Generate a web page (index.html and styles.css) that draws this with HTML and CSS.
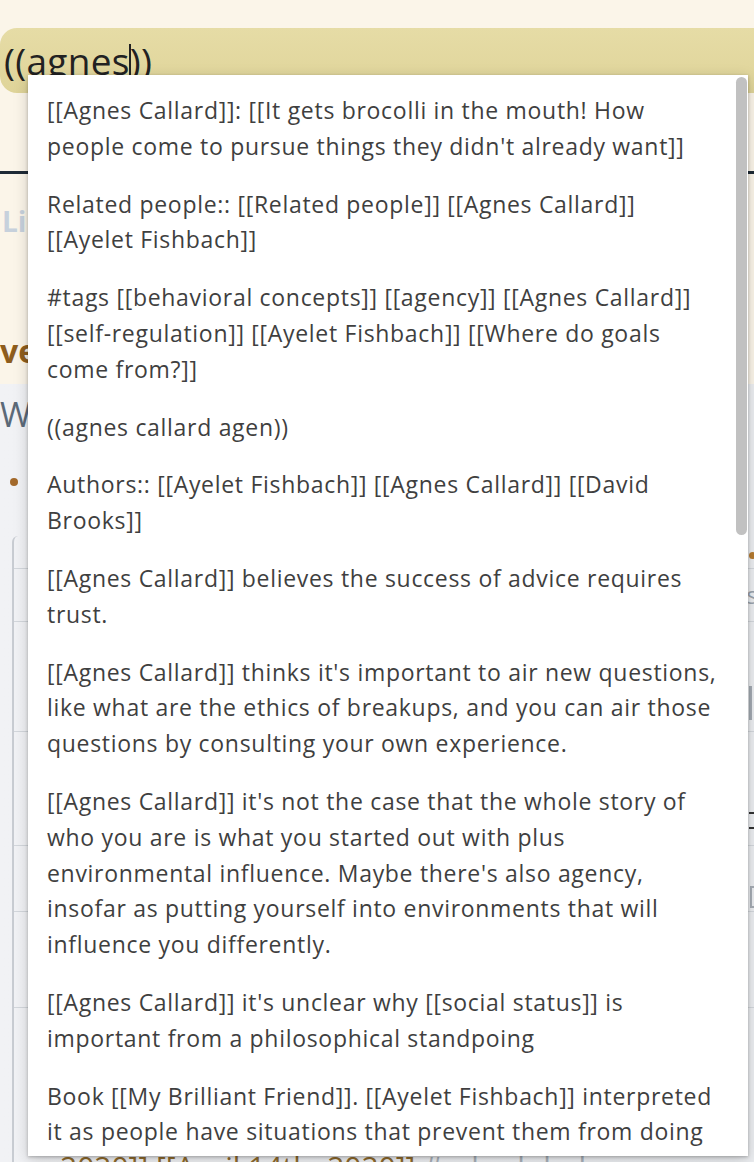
FILE: index.html
```html
<!DOCTYPE html>
<html lang="en">
<head>
    <meta charset="UTF-8">
    <meta name="viewport" content="width=device-width, initial-scale=1.0">
    <title>Block search</title>
    <link rel="stylesheet" href="styles.css">
</head>
<body>
    <div class="page">
        <div class="search">
            <span class="query">((agnes<span class="caret"></span>))</span>
        </div>

        <div class="title-rule"></div>
        <div class="ref-title">Linked References</div>
        <div class="page-title">ve</div>

        <div class="blocks">
            <div class="block-heading">W</div>
            <div class="bullet-row"><span class="dot"></span></div>
            <div class="thread">
                <div class="ref-card card-a"><span class="edge-dot"></span></div>
                <div class="ref-card card-b"><span class="edge-text">s</span></div>
                <div class="ref-card card-c"><span class="edge-bar"></span></div>
                <div class="ref-card card-d"><span class="edge-dash"></span><span class="edge-dash"></span></div>
                <div class="ref-card card-e"><span class="edge-bracket"></span></div>
                <div class="ref-card card-f"></div>
                <div class="footer-line"><span class="brown">2020]] [[April 14th, 2020]]</span> <span class="tag">#scheduled</span></div>
            </div>
        </div>
    </div>

    <!-- autocomplete popup over the search field -->
    <div class="popup">
        <div class="item">[[Agnes Callard]]: [[It gets brocolli in the mouth! How<br>people come to pursue things they didn't already want]]</div>
        <div class="item">Related people:: [[Related people]] [[Agnes Callard]]<br>[[Ayelet Fishbach]]</div>
        <div class="item">#tags [[behavioral concepts]] [[agency]] [[Agnes Callard]]<br>[[self-regulation]] [[Ayelet Fishbach]] [[Where do goals<br>come from?]]</div>
        <div class="item">((agnes callard agen))</div>
        <div class="item">Authors:: [[Ayelet Fishbach]] [[Agnes Callard]] [[David<br>Brooks]]</div>
        <div class="item">[[Agnes Callard]] believes the success of advice requires<br>trust.</div>
        <div class="item">[[Agnes Callard]] thinks it's important to air new questions,<br>like what are the ethics of breakups, and you can air those<br>questions by consulting your own experience.</div>
        <div class="item">[[Agnes Callard]] it's not the case that the whole story of<br>who you are is what you started out with plus<br>environmental influence. Maybe there's also agency,<br>insofar as putting yourself into environments that will<br>influence you differently.</div>
        <div class="item">[[Agnes Callard]] it's unclear why [[social status]] is<br>important from a philosophical standpoing</div>
        <div class="item">Book [[My Brilliant Friend]]. [[Ayelet Fishbach]] interpreted<br>it as people have situations that prevent them from doing<br>what they want to do.</div>
        <div class="thumb"></div>
    </div>
</body>
</html>
```

FILE: styles.css
```css
* {
    margin: 0;
    padding: 0;
    box-sizing: border-box;
}

body {
    width: 754px;
    height: 1162px;
    overflow: hidden;
    background: #fbf5e9;
    font-family: 'Open Sans', 'Lato', sans-serif;
    position: relative;
}

.page {
    min-height: 100%;
    display: flex;
    flex-direction: column;
}

.page > * {
    flex-shrink: 0;
}

.search {
    margin-top: 28px;
    height: 65px;
    background: linear-gradient(180deg, #e6dca6 0%, #dfd499 100%);
    border-radius: 17px 0 0 17px;
    padding-left: 4px;
    display: flex;
    align-items: center;
}

.query {
    font-size: 37px;
    color: #222;
    line-height: 1;
    letter-spacing: 0.3px;
    position: relative;
    top: 1px;
}

.caret {
    display: inline-block;
    width: 2px;
    height: 38px;
    background: #222;
    vertical-align: -7px;
    margin: 0 -1px;
}

.title-rule {
    margin-top: 78px;
    height: 3px;
    background: #1e2a36;
}

.ref-title {
    margin-top: 32px;
    font-size: 28px;
    font-weight: 700;
    color: #c7d1dc;
    padding-left: 2px;
    white-space: nowrap;
    line-height: 30px;
}

.page-title {
    margin-top: 98px;
    font-size: 32px;
    font-weight: 700;
    color: #8e5d1d;
    line-height: 34px;
    height: 50px;
}

.blocks {
    flex: 1;
    background: linear-gradient(90deg, #f1f2f5 0%, #eceef1 100%);
    display: flex;
    flex-direction: column;
}

.block-heading {
    margin-top: 12px;
    font-size: 34px;
    color: #5b6978;
    line-height: 36px;
}

.bullet-row {
    height: 100px;
    display: flex;
    align-items: center;
    padding-left: 10px;
}

.dot {
    width: 8px;
    height: 8px;
    border-radius: 50%;
    background: #a3692b;
}

.thread {
    flex: 1;
    margin-left: 12px;
    border-left: 2px solid #c8ccd2;
    border-top-left-radius: 6px;
    margin-top: 4px;
    display: flex;
    flex-direction: column;
}

.ref-card {
    border-bottom: 1px solid #d3d7dc;
    position: relative;
    flex-shrink: 0;
}

.card-a { height: 33px; }
.card-b { height: 53px; }
.card-c { height: 110px; }
.card-d { height: 114px; }
.card-e { height: 66px; }
.card-f { height: 96px; }

.edge-dot {
    position: absolute;
    right: -2px;
    top: 16px;
    width: 7px;
    height: 7px;
    border-radius: 50%;
    background: #b57a30;
}

.edge-text {
    position: absolute;
    right: -4px;
    top: 14px;
    font-size: 24px;
    line-height: 24px;
    color: #9aa3ad;
}

.edge-bar {
    position: absolute;
    right: 2px;
    top: 64px;
    width: 3px;
    height: 34px;
    background: #a3aab2;
}

.edge-dash {
    position: absolute;
    right: 0;
    width: 5px;
    height: 2px;
    background: #333;
    top: 80px;
}

.edge-dash + .edge-dash {
    top: 95px;
}

.edge-bracket {
    position: absolute;
    right: -2px;
    top: 40px;
    width: 6px;
    height: 22px;
    border: 2px solid #a7adb5;
}

.footer-line {
    margin-top: 144px;
    padding-left: 46px;
    font-size: 30px;
    line-height: 30px;
    white-space: nowrap;
}

.brown {
    color: #8e6a2c;
}

.tag {
    color: #a8b0b9;
}

/* autocomplete */

.popup {
    position: absolute;
    left: 28px;
    top: 75px;
    width: 720px;
    height: 1081px;
    background: #fff;
    box-shadow: 0 1px 3px rgba(0, 0, 0, 0.25), 0 4px 14px rgba(0, 0, 0, 0.18);
    overflow: hidden;
    padding: 7px 0;
}

.item {
    padding: 11px 19px;
    font-size: 23px;
    line-height: 35.8px;
    letter-spacing: 0.7px;
    color: #3f3f3f;
    white-space: nowrap;
}

.thumb {
    position: absolute;
    right: 1px;
    top: 2px;
    width: 11px;
    height: 458px;
    border-radius: 6px;
    background: #c1c1c1;
}
```
